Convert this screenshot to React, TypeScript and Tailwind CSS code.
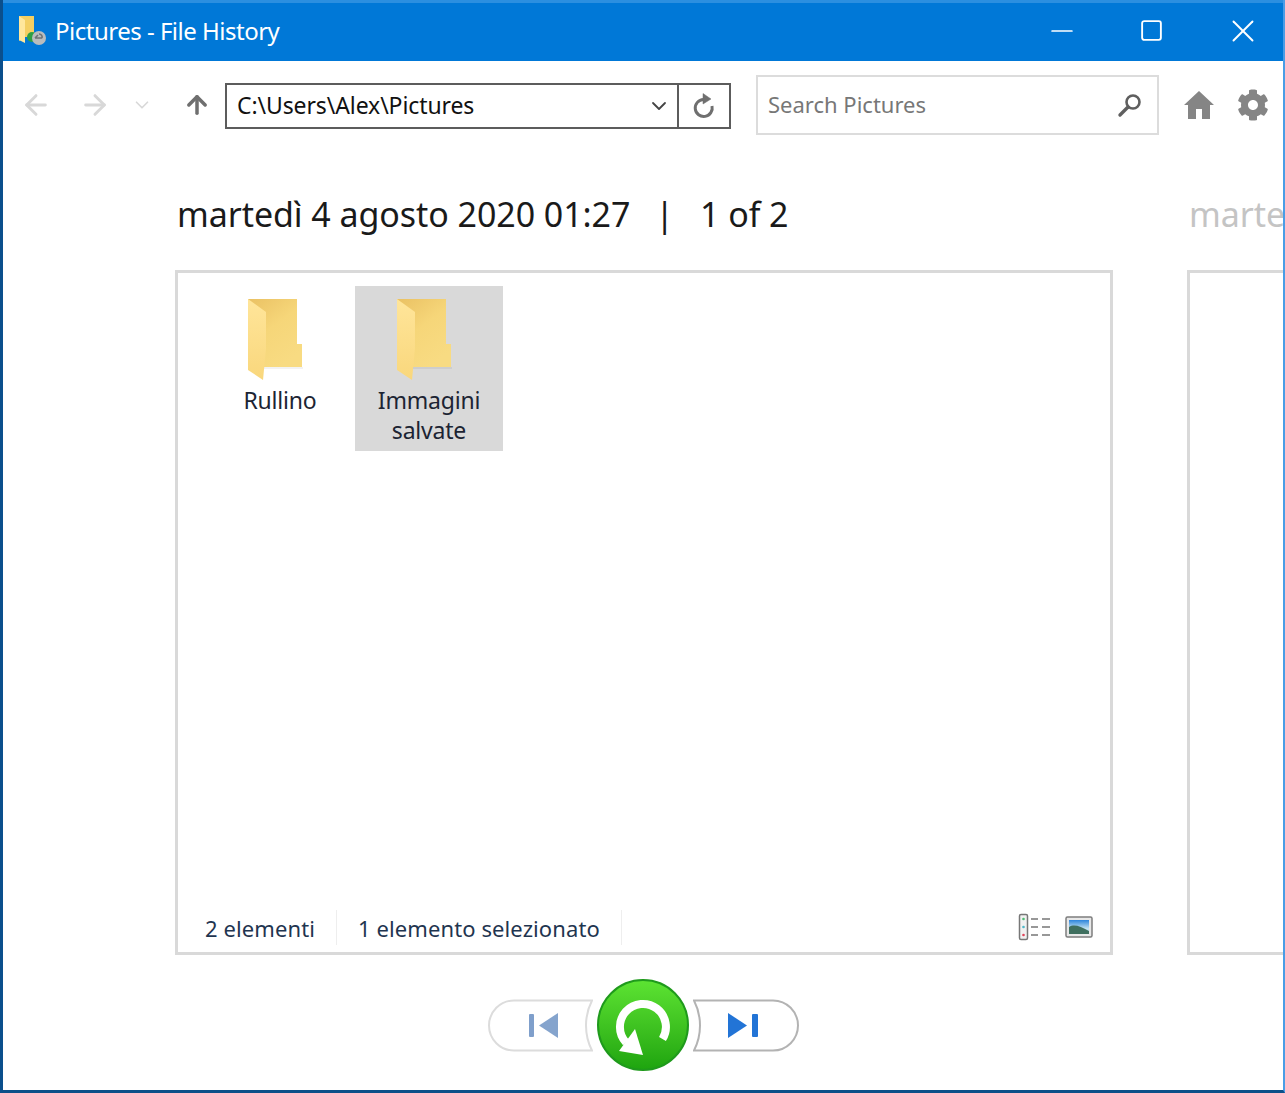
import { ArrowLeft, ArrowRight, ArrowUp, ChevronDown, Minus, Square, X } from "lucide-react";
import { FaCog } from "react-icons/fa";

function FolderIcon() {
  return (
    <svg width="60" height="88" viewBox="0 0 60 88">
      <defs>
        <linearGradient id="folderBack" x1="0" y1="0" x2="0.6" y2="1">
          <stop offset="0" stopColor="#eac163" />
          <stop offset="0.5" stopColor="#f6d679" />
          <stop offset="1" stopColor="#f8db82" />
        </linearGradient>
        <linearGradient id="folderFront" x1="0" y1="0" x2="0" y2="1">
          <stop offset="0" stopColor="#ffe59a" />
          <stop offset="1" stopColor="#f9d77c" />
        </linearGradient>
      </defs>
      <path d="M3 3H52V48H57V71H18L6 40Z" fill="url(#folderBack)" />
      <path d="M3 3L21 16V52L18 84L3 74Z" fill="url(#folderFront)" />
      <path d="M19 71H58V73H19Z" fill="#000" opacity="0.05" />
    </svg>
  );
}

function FolderItem({ label, selected }: { label: string; selected?: boolean }) {
  return (
    <div className={`flex h-[165px] w-[148px] flex-col items-center pt-[10px] ${selected ? "bg-[#d9d9d9]" : ""}`}>
      <div className="-ml-[10px] h-[88px]">
        <FolderIcon />
      </div>
      <div className="mt-[1px] w-[110px] text-center text-[23px] leading-[30px] tracking-[-0.2px] text-[#1c2433]">{label}</div>
    </div>
  );
}

function TitleIcon() {
  return (
    <svg width="30" height="32" viewBox="0 0 30 32">
      <path d="M2 1H17V17L19 22H8L2 26Z" fill="#f4cf62" />
      <path d="M2 1L8 5V28L2 25Z" fill="#ffe79c" />
      <circle cx="15" cy="22" r="5" fill="#2ea043" />
      <circle cx="22" cy="23" r="7" fill="#b9bcbd" />
      <path d="M18 23H25M18 23L21 20M25 23A3 3 0 0 0 22 19" stroke="#6e7376" strokeWidth="1.6" fill="none" />
    </svg>
  );
}

function DetailsIcon() {
  return (
    <svg width="34" height="28" viewBox="0 0 34 28">
      <rect x="1.5" y="1.5" width="8" height="25" rx="1.5" fill="#f1f1f1" stroke="#777" strokeWidth="1.5" />
      <circle cx="5.5" cy="6" r="1.3" fill="#4fbf74" />
      <circle cx="5.5" cy="14" r="1.3" fill="#4db8c9" />
      <circle cx="5.5" cy="22" r="1.3" fill="#e0455a" />
      <path d="M13 6H20M24 6H32M13 14H20M24 14H32M13 22H20M24 22H32" stroke="#777" strokeWidth="1.7" />
    </svg>
  );
}

function ThumbIcon() {
  return (
    <svg width="28" height="22" viewBox="0 0 28 22">
      <defs>
        <linearGradient id="thumbSky" x1="0" y1="0" x2="0" y2="1">
          <stop offset="0" stopColor="#2c84dc" />
          <stop offset="0.6" stopColor="#bfe0f0" />
        </linearGradient>
      </defs>
      <rect x="1" y="1" width="26" height="20" rx="1.5" fill="#e8e8e8" stroke="#7d7d7d" strokeWidth="1.5" />
      <rect x="4" y="4" width="20" height="14" fill="url(#thumbSky)" />
      <path d="M4 11C9 8 15 10 24 15V18H4Z" fill="#3f6f5f" />
    </svg>
  );
}

function PrevShape() {
  return (
    <svg width="105" height="53" viewBox="0 0 105 53">
      <path d="M104 1.5H26A25 25 0 0 0 26 51.5H104C96 36 96 17 104 1.5Z" fill="#fff" stroke="#dcdcdc" strokeWidth="2" />
      <rect x="41" y="15" width="5" height="23" rx="1" fill="#7f9fcb" />
      <path d="M70 14V39L51 26.5Z" fill="#85a4cd" />
    </svg>
  );
}

function NextShape() {
  return (
    <svg width="107" height="53" viewBox="0 0 107 53">
      <path d="M1 1.5H80A25 25 0 0 1 80 51.5H1C9 36 9 17 1 1.5Z" fill="#fff" stroke="#b3b3b3" strokeWidth="2" />
      <path d="M35 14V39L54 26.5Z" fill="#2274d6" />
      <rect x="59" y="15" width="6" height="23" rx="1" fill="#2274d6" />
    </svg>
  );
}

function RestoreButton() {
  return (
    <div className="flex h-[92px] w-[92px] shrink-0 items-center justify-center rounded-full border-2 border-[#1f9a1c] bg-gradient-to-b from-[#5ce332] to-[#1ea50f]">
      <svg width="88" height="88" viewBox="0 0 88 88">
        <path d="M63.5 58A23 23 0 1 0 27 61.5" fill="none" stroke="#fff" strokeWidth="8" />
        <path d="M20 70L44 74L36 48Z" fill="#fff" />
      </svg>
    </div>
  );
}

export default function App() {
  return (
    <div className="flex h-[1093px] w-[1285px] flex-col overflow-hidden border-b-[3px] border-l-[3px] border-r-2 border-b-[#0c4f88] border-l-[#0b4f8c] border-r-[#4a9de6] bg-white font-['Noto_Sans',sans-serif]">
      <div className="flex h-[61px] shrink-0 items-center border-t-[3px] border-[#2b8fe0] bg-[#0078d7] pb-[3px] pl-[14px] text-white">
        <TitleIcon />
        <span className="ml-[8px] text-[24px] tracking-[-0.5px]">Pictures - File History</span>
        <div className="ml-auto flex items-center">
          <Minus className="h-[34px] w-[34px]" strokeWidth={1.2} />
          <Square className="ml-[60px] h-[25px] w-[25px]" strokeWidth={1.8} />
          <X className="ml-[60px] mr-[21px] h-[38px] w-[38px]" strokeWidth={1.2} />
        </div>
      </div>

      <div className="flex h-[88px] shrink-0 items-center text-[#d8d8d8]">
        <ArrowLeft className="ml-[17px] h-[32px] w-[32px]" strokeWidth={2.2} />
        <ArrowRight className="ml-[27px] h-[32px] w-[32px]" strokeWidth={2.2} />
        <ChevronDown className="ml-[20px] h-[22px] w-[22px]" strokeWidth={1.8} />
        <ArrowUp className="ml-[30px] h-[28px] w-[28px] text-[#6f6f6f]" strokeWidth={3} />
        <div className="ml-[14px] mt-[2px] flex h-[46px] w-[506px] border-2 border-[#5c5c5c] text-[#111]">
          <div className="flex flex-1 items-center justify-between border-r-2 border-[#5c5c5c] pb-[2px] pl-[10px] pr-[6px] text-[23px] tracking-[-0.1px]">
            <span>C:\Users\Alex\Pictures</span>
            <ChevronDown className="mt-[2px] h-[24px] w-[24px] text-[#444]" strokeWidth={1.8} />
          </div>
          <div className="flex w-[50px] items-center justify-center">
            <svg width="26" height="28" viewBox="0 0 26 28" fill="none" stroke="#6f6f6f" strokeWidth="3">
              <path d="M12.5 7.5A8.5 8.5 0 1 0 21 14" />
              <path d="M12 1.5V12L20 7Z" fill="#6f6f6f" strokeWidth="0.5" />
            </svg>
          </div>
        </div>
        <div className="ml-[25px] flex h-[60px] w-[403px] items-center justify-between border-2 border-[#dcdcdc] pl-[10px] pr-[14px] text-[22px] text-[#777]">
          <span className="-mt-[2px]">Search Pictures</span>
          <svg width="26" height="26" viewBox="0 0 26 26" fill="none" stroke="#5f5f5f">
            <circle cx="16" cy="10" r="6.5" strokeWidth="2.6" />
            <path d="M11 15L3 23" strokeWidth="3.4" strokeLinecap="round" />
          </svg>
        </div>
        <svg className="ml-[25px]" width="30" height="30" viewBox="0 0 30 30" fill="#858585">
          <path d="M15 1L30 15H26V29H18V19H12V29H4V15H0Z" />
        </svg>
        <FaCog className="ml-[23px] h-[32px] w-[32px] text-[#858585]" />
      </div>

      <div className="flex flex-1 gap-[74px] pl-[172px]">
        <div className="flex w-[938px] shrink-0 flex-col">
          <div className="flex h-[121px] items-start pl-[2px] pt-[42px] text-[34px] leading-[46px] tracking-[-0.07px] text-[#1a1a1a]">
            <span>martedì 4 agosto 2020 01:27</span>
            <span className="ml-[25px]">|</span>
            <span className="ml-[26px]">1 of 2</span>
          </div>
          <div className="flex h-[685px] flex-col border-[3px] border-[#d9d9d9]">
            <div className="flex flex-1 items-start gap-[1px] pl-[28px] pt-[13px]">
              <FolderItem label="Rullino" />
              <FolderItem label="Immagini salvate" selected />
            </div>
            <div className="flex h-[50px] items-center pl-[27px] pr-[17px] text-[22px] tracking-[0.1px] text-[#1f3550]">
              <span className="border-r border-[#eeeeee] pr-[21px] pt-[2px]">2 elementi</span>
              <span className="border-r border-[#eeeeee] px-[21px] pt-[2px]">1 elemento selezionato</span>
              <div className="ml-auto flex items-center gap-[13px]">
                <DetailsIcon />
                <ThumbIcon />
              </div>
            </div>
          </div>
          <div className="-ml-[1px] mt-[24px] flex items-center justify-center gap-[4px]">
            <PrevShape />
            <RestoreButton />
            <NextShape />
          </div>
        </div>
        <div className="flex w-[938px] shrink-0 flex-col">
          <div className="flex h-[121px] items-start pl-[2px] pt-[42px] text-[34px] leading-[46px] tracking-[-0.07px] text-[#c4c4c4]">
            <span>martedì 4 agosto 2020 01:27</span>
          </div>
          <div className="h-[685px] border-[3px] border-[#d9d9d9]" />
        </div>
      </div>
    </div>
  );
}
